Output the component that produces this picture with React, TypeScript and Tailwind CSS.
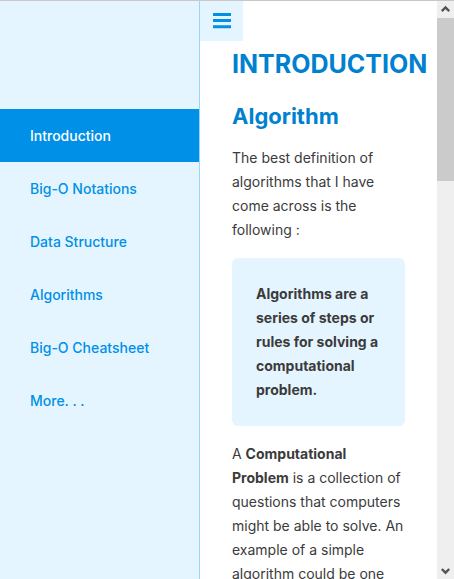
const links = [
  'Introduction',
  'Big-O Notations',
  'Data Structure',
  'Algorithms',
  'Big-O Cheatsheet',
  'More. . .',
];

function Sidebar() {
  return (
    <nav
      aria-label="Topics"
      className="w-50 shrink-0 border-r border-[#99d6ff] bg-[#e5f5ff] pt-27 text-sm font-medium text-[#0090e7]"
    >
      <ul>
        {links.map((label, i) => (
          <li key={label}>
            <a
              href="#"
              aria-current={i === 0 ? 'page' : undefined}
              className={
                i === 0
                  ? 'block bg-[#0090e7] px-[30px] py-4 leading-[21px] text-white'
                  : 'block px-[30px] py-4 leading-[21px]'
              }
            >
              {label}
            </a>
          </li>
        ))}
      </ul>
    </nav>
  );
}

function ScrollTrack() {
  return (
    <div aria-hidden="true" className="flex w-[17px] shrink-0 flex-col bg-[#efefef]">
      <svg viewBox="0 0 17 17" className="h-[17px] w-[17px]" fill="none" stroke="#555555" strokeWidth="2.4">
        <path d="M4.8 10.2 8.5 6.5l3.7 3.7" />
      </svg>
      <div className="h-[163px] bg-[#cbcbcb]" />
      <svg viewBox="0 0 17 17" className="mt-auto h-[17px] w-[17px]" fill="none" stroke="#555555" strokeWidth="2.4">
        <path d="M4.8 7 8.5 10.7 12.2 7" />
      </svg>
    </div>
  );
}

export default function App() {
  return (
    <div className="flex h-screen overflow-hidden border-t border-[#c8c8c8] bg-white font-['Inter',sans-serif]">
      <Sidebar />
      <main className="min-w-0 flex-1 overflow-hidden text-sm leading-6 text-[#3b3b3b]">
        <button
          type="button"
          aria-label="Toggle menu"
          className="flex h-10 w-[43px] items-center justify-center bg-[#e5f5ff] text-[#0090e7]"
        >
          <svg viewBox="0 0 18 16" className="h-4 w-[18px]" fill="currentColor">
            <path d="M0 0h18v3H0zM0 6.1h18v3H0zM0 12.3h18v3H0z" />
          </svg>
        </button>
        <div className="px-8 pt-[7px]">
          <h1 className="text-[25px] leading-8 font-bold text-[#0081cf]">INTRODUCTION</h1>
          <h2 className="mt-5 text-[22px] leading-8 font-bold text-[#0081cf]">Algorithm</h2>
          <p className="mt-[14px]">
            The best definition of algorithms that I have come across is the following :
          </p>
          <blockquote className="my-4 rounded-md bg-[#e5f5ff] p-6 font-bold">
            Algorithms are a series of steps or rules for solving a computational problem.
          </blockquote>
          <p>
            A <strong>Computational Problem</strong> is a collection of questions that computers
            might be able to solve. An example of a simple algorithm could be one
          </p>
        </div>
      </main>
      <ScrollTrack />
    </div>
  );
}
